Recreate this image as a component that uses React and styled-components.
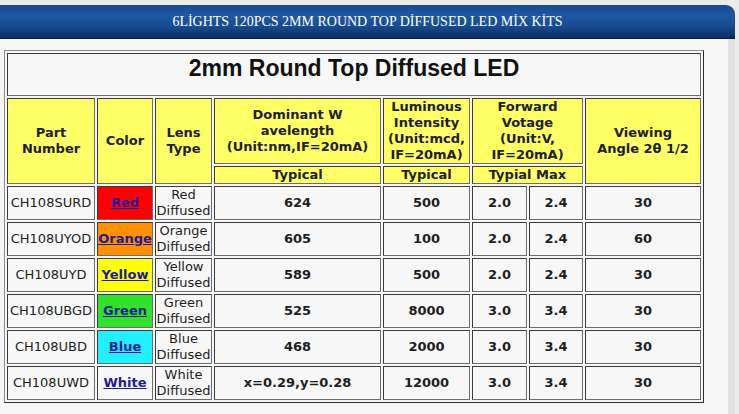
import React from "react";
import styled, { createGlobalStyle } from "styled-components";

const GlobalStyle = createGlobalStyle`
  * { box-sizing: border-box; }
  html, body { margin: 0; padding: 0; background: #ececec; }
  body { font-family: "DejaVu Sans", Verdana, sans-serif; color: #1e1e1e; }
`;

const Page = styled.div`
  width: 739px;
  height: 414px;
  padding: 5px 4px 0 0;
  background: #ececec;
  overflow: hidden;
`;

const Frame = styled.div`
  width: 735px;
  height: 100%;
  display: flex;
  flex-direction: column;
`;

const TitleBar = styled.div`
  height: 34px;
  display: flex;
  align-items: center;
  justify-content: center;
  border-radius: 0 9px 0 0;
  background: linear-gradient(to bottom, #18498d 0%, #1d58a3 30%, #174c91 65%, #0b2c5f 100%);
  border-bottom: 1px solid #07224a;
  color: #fff;
  font-family: "Liberation Serif", "Times New Roman", serif;
  font-size: 14px;
  white-space: nowrap;
`;

const Body = styled.div`
  flex: 1;
  display: flex;
`;

const Panel = styled.div`
  width: 728px;
  padding: 11px 0 0 4px;
  background: #f6f6f6;
`;

const Gutter = styled.div`
  flex: 1;
  background: linear-gradient(to right, #e2e2e2 0 7px, #efefef 7px);
`;

const SpecTable = styled.table`
  width: 700px;
  table-layout: fixed;
  border-collapse: separate;
  border-spacing: 2px;
  border: 1px solid;
  border-color: #8a8a8a #2e2e2e #2e2e2e #8a8a8a;
  background: #f6f6f6;
  font-size: 13px;
  line-height: 16px;
`;

const Col = styled.col`
  width: ${(p) => p.$w}px;
`;

const Cell = styled.td`
  padding: 0;
  border: 1px solid;
  border-color: #3c3c3c #6e6e6e #6e6e6e #3c3c3c;
  text-align: center;
  vertical-align: middle;
  background: ${(p) => p.$bg || "#f7f7f7"};
  font-weight: ${(p) => (p.$bold ? "bold" : "normal")};
  white-space: ${(p) => (p.$nowrap ? "nowrap" : "normal")};
  overflow: hidden;
`;

const HeadCell = styled.th`
  padding: 0;
  border: 1px solid;
  border-color: #3c3c3c #6e6e6e #6e6e6e #3c3c3c;
  background: #ffff66;
  text-align: center;
  vertical-align: middle;
  font-weight: bold;
  color: #202020;
`;

const CaptionCell = styled.th`
  padding: 1px 0 14px;
  border: 1px solid;
  border-color: #3c3c3c #6e6e6e #6e6e6e #3c3c3c;
  background: #f7f7f7;
  font-family: "Liberation Sans", Arial, sans-serif;
  font-size: 23px;
  line-height: 26px;
  font-weight: bold;
  color: #111;
  vertical-align: top;
`;

const ColorLink = styled.a`
  color: #1f1a9c;
  font-weight: bold;
  text-decoration: underline;
`;

const rows = [
  { part: "CH108SURD", color: "Red", bg: "#fe0000", lens: "Red", wave: "624", lum: "500", typ: "2.0", max: "2.4", angle: "30" },
  { part: "CH108UYOD", color: "Orange", bg: "#ff9000", lens: "Orange", wave: "605", lum: "100", typ: "2.0", max: "2.4", angle: "60" },
  { part: "CH108UYD", color: "Yellow", bg: "#ffff0a", lens: "Yellow", wave: "589", lum: "500", typ: "2.0", max: "2.4", angle: "30" },
  { part: "CH108UBGD", color: "Green", bg: "#30e22a", lens: "Green", wave: "525", lum: "8000", typ: "3.0", max: "3.4", angle: "30" },
  { part: "CH108UBD", color: "Blue", bg: "#20f0ff", lens: "Blue", wave: "468", lum: "2000", typ: "3.0", max: "3.4", angle: "30" },
  { part: "CH108UWD", color: "White", bg: null, lens: "White", wave: "x=0.29,y=0.28", lum: "12000", typ: "3.0", max: "3.4", angle: "30" },
];

const widths = [88, 56, 57, 167, 87, 55, 54, 116];

export default function App() {
  return (
    <>
      <GlobalStyle />
      <Page>
        <Frame>
          <TitleBar>6LİGHTS 120PCS 2MM ROUND TOP DİFFUSED LED MİX KİTS</TitleBar>
          <Body>
            <Panel>
              <SpecTable>
                <colgroup>
                  {widths.map((w, i) => (
                    <Col key={i} $w={w} />
                  ))}
                </colgroup>
                <thead>
                  <tr>
                    <CaptionCell colSpan={8}>2mm Round Top Diffused LED</CaptionCell>
                  </tr>
                  <tr>
                    <HeadCell rowSpan={2}>Part<br />Number</HeadCell>
                    <HeadCell rowSpan={2}>Color</HeadCell>
                    <HeadCell rowSpan={2}>Lens<br />Type</HeadCell>
                    <HeadCell>Dominant W<br />avelength<br />(Unit:nm,IF=20mA)</HeadCell>
                    <HeadCell>Luminous<br />Intensity<br />(Unit:mcd,<br />IF=20mA)</HeadCell>
                    <HeadCell colSpan={2}>Forward<br />Votage<br />(Unit:V,<br />IF=20mA)</HeadCell>
                    <HeadCell rowSpan={2}>Viewing<br />Angle 2θ 1/2</HeadCell>
                  </tr>
                  <tr>
                    <HeadCell>Typical</HeadCell>
                    <HeadCell>Typical</HeadCell>
                    <HeadCell colSpan={2}>Typial Max</HeadCell>
                  </tr>
                </thead>
                <tbody>
                  {rows.map((r) => (
                    <tr key={r.part}>
                      <Cell $nowrap>{r.part}</Cell>
                      <Cell $bg={r.bg}>
                        <ColorLink href="#">{r.color}</ColorLink>
                      </Cell>
                      <Cell>{r.lens}<br />Diffused</Cell>
                      <Cell $bold>{r.wave}</Cell>
                      <Cell $bold>{r.lum}</Cell>
                      <Cell $bold>{r.typ}</Cell>
                      <Cell $bold>{r.max}</Cell>
                      <Cell $bold>{r.angle}</Cell>
                    </tr>
                  ))}
                </tbody>
              </SpecTable>
            </Panel>
            <Gutter />
          </Body>
        </Frame>
      </Page>
    </>
  );
}
